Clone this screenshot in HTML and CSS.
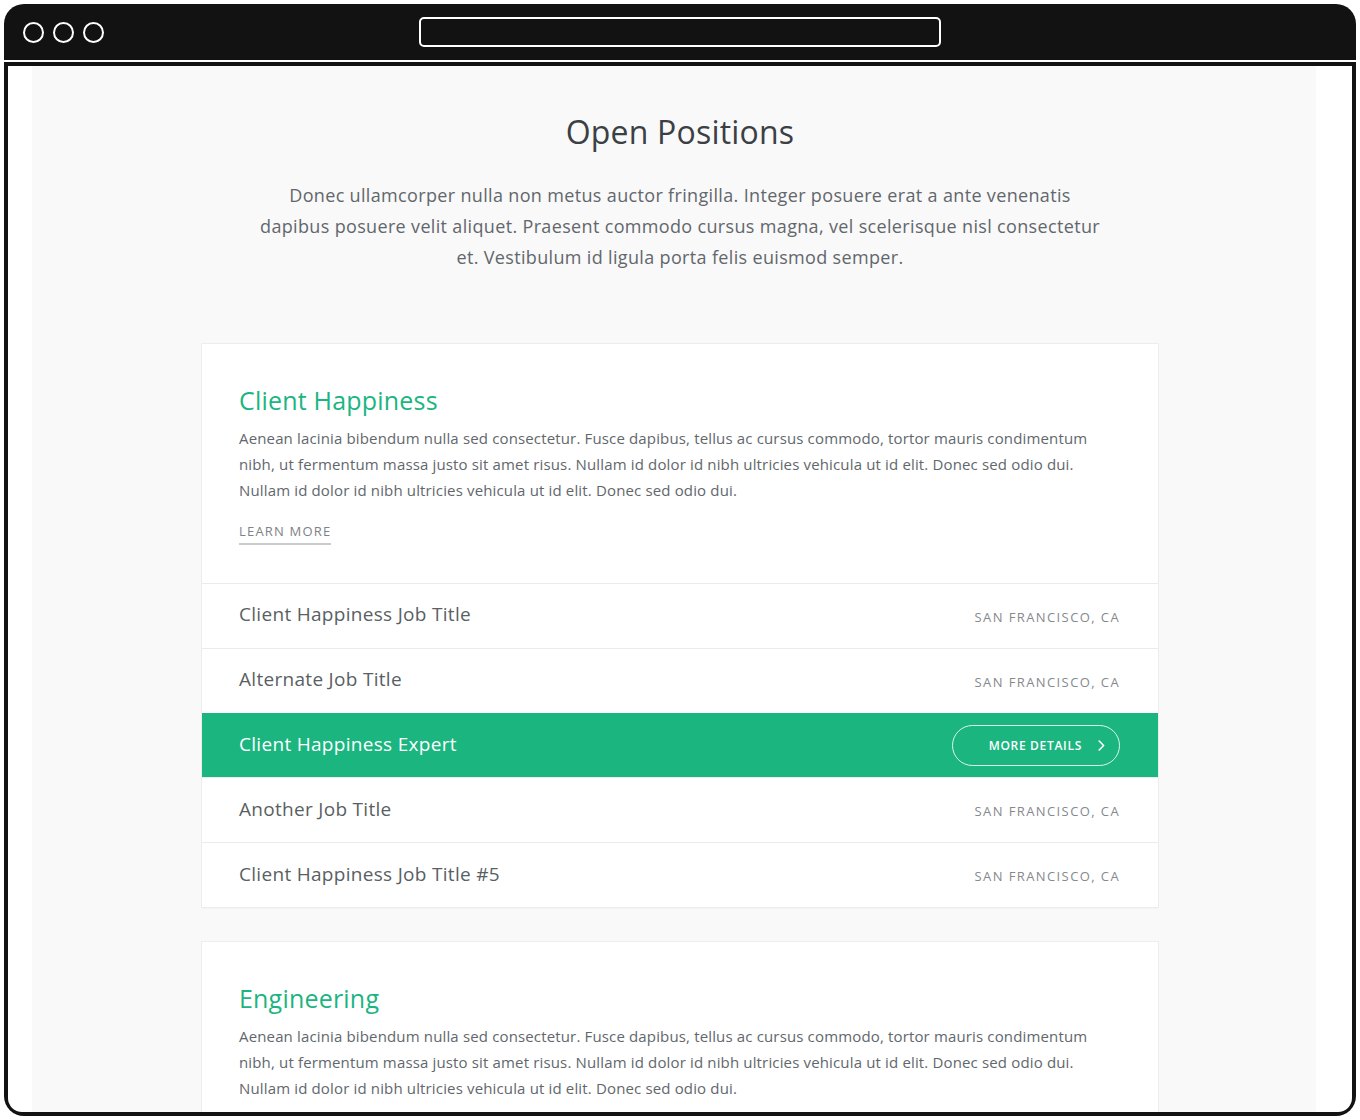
FILE: index.html
```html
<!DOCTYPE html>
<html lang="en">
<head>
<meta charset="utf-8">
<title>Open Positions</title>
<link rel="stylesheet" href="styles.css">
</head>
<body>
<div class="window">
  <div class="topbar">
    <div class="dots">
      <span class="dot"></span><span class="dot"></span><span class="dot"></span>
    </div>
    <div class="urlbar"></div>
  </div>
  <div class="frame-body">
    <div class="viewport">
      <main class="page">
        <h1 class="page-title">Open Positions</h1>
        <p class="intro">Donec ullamcorper nulla non metus auctor fringilla. Integer posuere erat a ante venenatis dapibus posuere velit aliquet. Praesent commodo cursus magna, vel scelerisque nisl consectetur et. Vestibulum id ligula porta felis euismod semper.</p>

        <section class="dept">
          <div class="dept-head">
            <h2 class="dept-title">Client Happiness</h2>
            <p class="dept-desc">Aenean lacinia bibendum nulla sed consectetur. Fusce dapibus, tellus ac cursus commodo, tortor mauris condimentum nibh, ut fermentum massa justo sit amet risus. Nullam id dolor id nibh ultricies vehicula ut id elit. Donec sed odio dui. Nullam id dolor id nibh ultricies vehicula ut id elit. Donec sed odio dui.</p>
            <a class="learn" href="#">Learn More</a>
          </div>
          <ul class="jobs">
            <li class="job"><span class="job-title">Client Happiness Job Title</span><span class="job-loc">San Francisco, CA</span></li>
            <li class="job"><span class="job-title">Alternate Job Title</span><span class="job-loc">San Francisco, CA</span></li>
            <li class="job active"><span class="job-title">Client Happiness Expert</span>
              <a class="details" href="#">More Details
                <svg class="chev" width="7" height="11" viewBox="0 0 7 11"><path d="M1.2 1 L5.6 5.5 L1.2 10" fill="none" stroke="#fff" stroke-width="1.6" stroke-linecap="round" stroke-linejoin="round"/></svg>
              </a>
            </li>
            <li class="job"><span class="job-title">Another Job Title</span><span class="job-loc">San Francisco, CA</span></li>
            <li class="job"><span class="job-title">Client Happiness Job Title #5</span><span class="job-loc">San Francisco, CA</span></li>
          </ul>
        </section>

        <section class="dept">
          <div class="dept-head">
            <h2 class="dept-title">Engineering</h2>
            <p class="dept-desc">Aenean lacinia bibendum nulla sed consectetur. Fusce dapibus, tellus ac cursus commodo, tortor mauris condimentum nibh, ut fermentum massa justo sit amet risus. Nullam id dolor id nibh ultricies vehicula ut id elit. Donec sed odio dui. Nullam id dolor id nibh ultricies vehicula ut id elit. Donec sed odio dui.</p>
          </div>
        </section>
      </main>
    </div>
  </div>
</div>
</body>
</html>
```
FILE: styles.css
```css
* { box-sizing: border-box; }
html, body { margin: 0; padding: 0; background: #fff; }
body { font-family: "Open Sans", Lato, sans-serif; }

.window {
  margin: 4px;
  height: 1112px;
  background: #121212;
  border-radius: 20px;
  display: flex;
  flex-direction: column;
  overflow: hidden;
}

.topbar {
  height: 56px;
  flex: none;
  display: flex;
  align-items: center;
  padding: 0 0 0 19px;
}
.dots { display: flex; gap: 9px; }
.dot {
  width: 21px; height: 21px;
  border: 2px solid #fff;
  border-radius: 50%;
}
.urlbar {
  margin-left: 315px;
  width: 522px;
  height: 30px;
  border: 2px solid #fff;
  border-radius: 5px;
}

.frame-body {
  flex: 1;
  border-top: 2px solid #fff;
  padding: 4px;
  display: flex;
  min-height: 0;
}
.viewport {
  flex: 1;
  border-radius: 0 0 14px 14px;
  overflow: hidden;
  background: linear-gradient(to right, #fff 24px, #f9f9f9 24px, #f9f9f9 1308px, #fff 1308px);
}

.page {
  width: 956px;
  margin: 0 auto;
  padding-top: 46px;
}
.page-title {
  margin: 0;
  text-align: center;
  font-size: 32px;
  line-height: 40px;
  font-weight: 400;
  letter-spacing: 0.2px;
  color: #3b4045;
}
.intro {
  margin: 28px auto 0;
  max-width: 852px;
  text-align: center;
  font-size: 18px;
  line-height: 31px;
  letter-spacing: 0.34px;
  color: #62676c;
}

.dept {
  background: #fff;
  margin-top: 71px;
  box-shadow: 0 0 0 1px #ededed, 0 1px 2px rgba(0,0,0,0.08);
}
.dept + .dept { margin-top: 35px; }
.dept-head { padding: 40px 37px 38px; }
.dept-title {
  margin: 0;
  font-size: 25px;
  line-height: 32px;
  font-weight: 400;
  letter-spacing: 0.2px;
  color: #1bb57f;
}
.dept-desc {
  margin: 9px 0 0;
  font-size: 15px;
  line-height: 26px;
  letter-spacing: 0.15px;
  color: #62676c;
}
.learn {
  display: inline-block;
  margin-top: 19px;
  font-size: 13px;
  line-height: 18px;
  letter-spacing: 1.2px;
  text-transform: uppercase;
  color: #7d8287;
  text-decoration: none;
  padding-bottom: 3px;
  border-bottom: 2px solid #c9ccd0;
}

.jobs { list-style: none; margin: 0; padding: 0; }
.job {
  height: 64.8px;
  border-top: 1px solid #ebebeb;
  display: flex;
  align-items: center;
  justify-content: space-between;
  padding: 0 38px 0 37px;
}
.job-title {
  font-size: 19px;
  letter-spacing: 0.3px;
  color: #5a5f64;
  margin-top: -3px;
}
.job-loc {
  font-size: 13px;
  letter-spacing: 1.4px;
  text-transform: uppercase;
  color: #85898d;
  margin-top: 2px;
}
.job.active {
  background: #1bb57f;
  border-top-color: #1bb57f;
}
.job.active .job-title { color: #fff; }
.details {
  display: flex;
  align-items: center;
  gap: 16px;
  height: 41px;
  padding: 0 14px 0 36px;
  border: 1px solid rgba(255,255,255,0.85);
  border-radius: 21px;
  color: #fff;
  font-size: 12px;
  font-weight: 600;
  letter-spacing: 0.7px;
  text-transform: uppercase;
  text-decoration: none;
  white-space: nowrap;
  margin-top: 1px;
}
.chev { display: block; }
```
